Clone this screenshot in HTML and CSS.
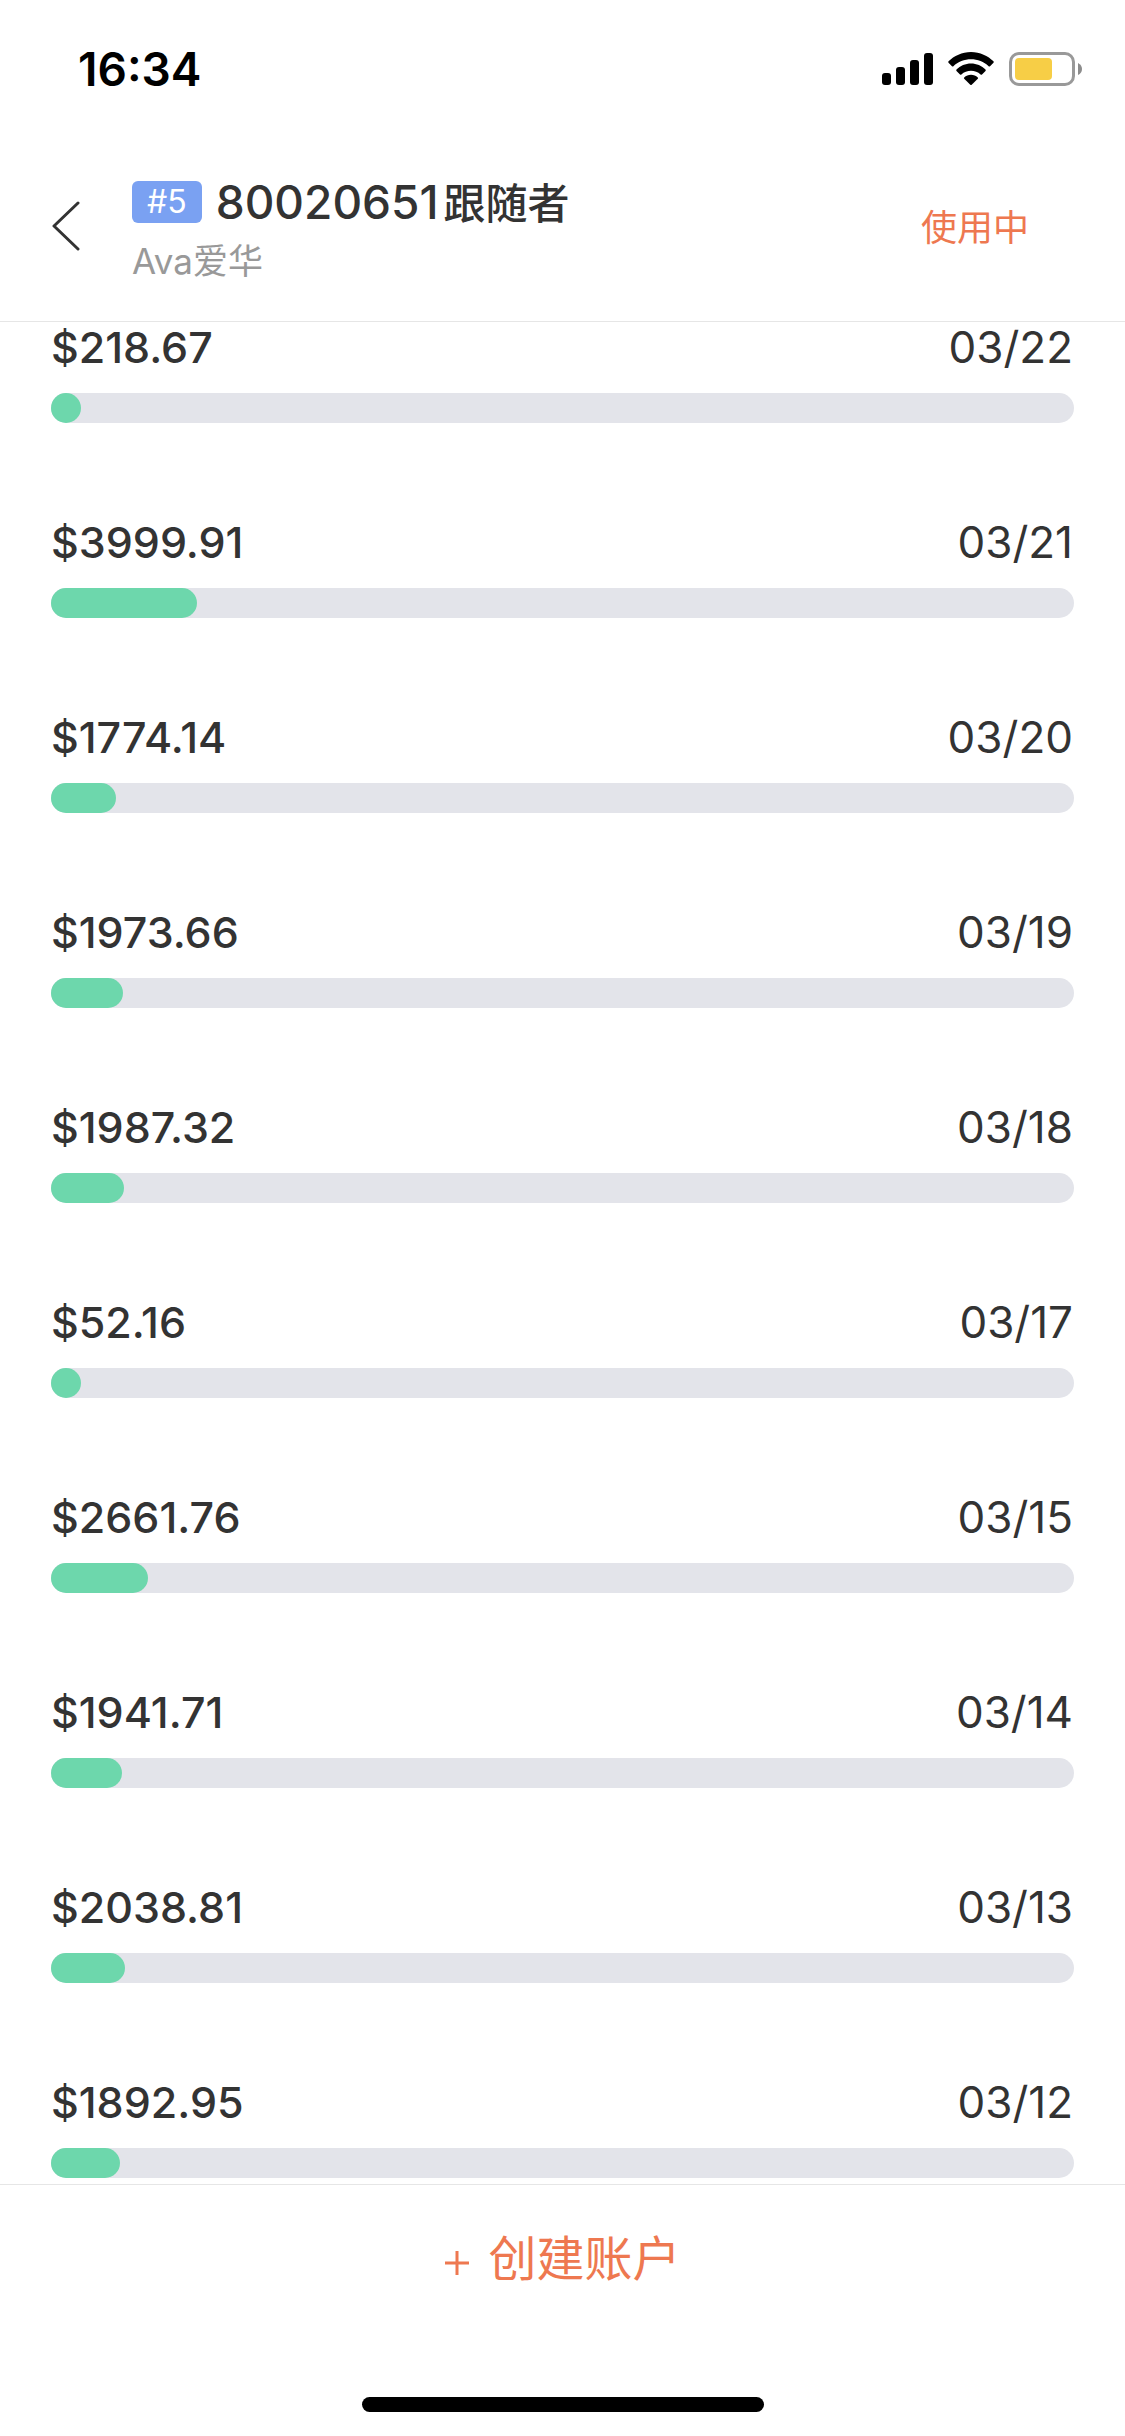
FILE: index.html
```html
<!DOCTYPE html>
<html lang="zh-CN">
<head>
<meta charset="utf-8">
<meta name="viewport" content="width=device-width, initial-scale=1">
<title>80020651跟随者</title>
<link rel="stylesheet" href="styles.css">
</head>
<body>
<div class="screen">
  <div class="status">
    <time class="clock">16:34</time>
    <div class="status-icons">
      <svg width="51" height="34" viewBox="0 0 51 34" aria-hidden="true">
        <rect x="0" y="21" width="9" height="12" rx="3"/>
        <rect x="14" y="15" width="9" height="18" rx="3"/>
        <rect x="28" y="8" width="9" height="25" rx="3"/>
        <rect x="42" y="1" width="9" height="32" rx="3"/>
      </svg>
      <svg width="46" height="34" viewBox="0 0 46 34" aria-hidden="true">
        <path d="M23 0C32 0 40 4 45.500 9.300Q46 10 45.500 10.700L42 14.200Q41.300 14.800 40.600 14.200C36 9.700 29.500 7.300 23 7.300S10 9.700 5.400 14.200Q4.700 14.800 4 14.200L.5 10.700Q0 10 .5 9.300C6 4 14 0 23 0Z"/>
        <path d="M23 11.500C28.500 11.500 33.800 13.800 37.500 17.500Q38.100 18.200 37.500 18.900L34 22.400Q33.300 23 32.600 22.400C30 19.900 26.500 18.700 23 18.700S16 19.900 13.400 22.400Q12.700 23 12 22.400L8.500 18.900Q7.900 18.200 8.500 17.500C12.200 13.800 17.500 11.500 23 11.500Z"/>
        <path d="M23 22.800C25.600 22.800 28 23.800 29.800 25.400Q30.400 26.100 29.800 26.800L23.700 32.700Q23 33.300 22.300 32.700L16.200 26.800Q15.600 26.100 16.200 25.400C18 23.800 20.400 22.800 23 22.800Z"/>
      </svg>
      <svg width="74" height="34" viewBox="0 0 74 34" aria-hidden="true">
        <rect x="1.500" y="1.500" width="63" height="31" rx="8.500" fill="#fff" stroke="#999" stroke-width="3"/>
        <rect x="6" y="6" width="37" height="22" rx="4" fill="#f7ce46"/>
        <path d="M69 11Q73 13 73 17T69 23Z" fill="#8c8c8c"/>
      </svg>
    </div>
  </div>

  <header class="header">
    <button class="back" type="button" aria-label="返回">
      <svg width="28" height="50" viewBox="0 0 28 50" aria-hidden="true">
        <path d="M26 2L2 25L26 48" fill="none" stroke="#333" stroke-width="3" stroke-linecap="round" stroke-linejoin="round"/>
      </svg>
    </button>
    <div class="account">
      <h1 class="title"><span class="badge">#5</span><span class="number">80020651</span><span class="role">跟随者</span></h1>
      <p class="subtitle">Ava爱华</p>
    </div>
    <span class="state">使用中</span>
  </header>

  <main class="list">
    <section class="row">
      <div class="labels"><span class="amount">$218.67</span><time class="date">03/22</time></div>
      <div class="track"><div class="fill" style="width:0.78%"></div></div>
    </section>
    <section class="row">
      <div class="labels"><span class="amount">$3999.91</span><time class="date">03/21</time></div>
      <div class="track"><div class="fill" style="width:14.29%"></div></div>
    </section>
    <section class="row">
      <div class="labels"><span class="amount">$1774.14</span><time class="date">03/20</time></div>
      <div class="track"><div class="fill" style="width:6.34%"></div></div>
    </section>
    <section class="row">
      <div class="labels"><span class="amount">$1973.66</span><time class="date">03/19</time></div>
      <div class="track"><div class="fill" style="width:7.05%"></div></div>
    </section>
    <section class="row">
      <div class="labels"><span class="amount">$1987.32</span><time class="date">03/18</time></div>
      <div class="track"><div class="fill" style="width:7.10%"></div></div>
    </section>
    <section class="row">
      <div class="labels"><span class="amount">$52.16</span><time class="date">03/17</time></div>
      <div class="track"><div class="fill" style="width:0.19%"></div></div>
    </section>
    <section class="row">
      <div class="labels"><span class="amount">$2661.76</span><time class="date">03/15</time></div>
      <div class="track"><div class="fill" style="width:9.51%"></div></div>
    </section>
    <section class="row">
      <div class="labels"><span class="amount">$1941.71</span><time class="date">03/14</time></div>
      <div class="track"><div class="fill" style="width:6.93%"></div></div>
    </section>
    <section class="row">
      <div class="labels"><span class="amount">$2038.81</span><time class="date">03/13</time></div>
      <div class="track"><div class="fill" style="width:7.28%"></div></div>
    </section>
    <section class="row">
      <div class="labels"><span class="amount">$1892.95</span><time class="date">03/12</time></div>
      <div class="track"><div class="fill" style="width:6.76%"></div></div>
    </section>
  </main>

  <footer class="footer">
    <button class="create" type="button"><svg class="plus" width="26" height="34" viewBox="0 0 26 34" aria-hidden="true"><path d="M13 9V33M1 21H25" stroke="currentColor" stroke-width="3"/></svg>创建账户</button>
    <div class="home-indicator"></div>
  </footer>
</div>
</body>
</html>
```
FILE: styles.css
```css
* {
  box-sizing: border-box;
}

body {
  margin: 0;
  background: #fff;
  color: #333;
  font-family: Inter, "Noto Sans CJK SC", sans-serif;
}

button {
  padding: 0;
  border: 0;
  background: none;
  font-family: inherit;
  cursor: pointer;
}

.screen {
  display: flex;
  flex-direction: column;
  min-height: 100vh;
}

.status {
  display: flex;
  align-items: center;
  justify-content: space-between;
  padding: 42px 42px 0 78px;
}

.clock {
  color: #000;
  font-size: 46px;
  font-weight: 600;
  line-height: 54px;
}

.status-icons {
  display: flex;
  gap: 15px;
}

.header {
  display: flex;
  align-items: center;
  padding: 68px 96px 33px 52px;
  border-bottom: 1px solid #e6e6e6;
}

.back {
  display: flex;
  width: 80px;
}

.account {
  flex: 1;
  padding-top: 6px;
}

.title {
  display: flex;
  align-items: center;
  margin: 0;
  font-size: 46px;
  font-weight: 500;
  line-height: 64px;
}

.badge {
  margin-right: 14px;
  padding: 0 15px;
  border-radius: 6px;
  background: #7aa1f2;
  color: #fff;
  font-size: 32px;
  font-weight: 400;
  line-height: 42px;
}

.role {
  margin-left: 5px;
  padding-top: 4px;
  font-size: 42px;
  line-height: 60px;
}

.subtitle {
  margin: 0;
  color: #999;
  font-size: 35px;
  line-height: 54px;
}

.state {
  color: #ee7850;
  font-size: 36px;
  line-height: 58px;
  padding-top: 4px;
}

.list {
  flex: 1;
  display: flex;
  flex-direction: column;
  gap: 94px;
  padding: 0 51px 6px;
}

.labels {
  display: flex;
  justify-content: space-between;
  margin-bottom: 21px;
  font-size: 44px;
  line-height: 50px;
}

.amount {
  font-size: 43px;
  font-weight: 500;
}

.date {
  padding-right: 1px;
}

.track {
  height: 30px;
  border-radius: 15px;
  background: #e3e4ea;
}

.fill {
  min-width: 30px;
  height: 100%;
  border-radius: 15px;
  background: #6dd7ac;
}

.footer {
  display: flex;
  flex-direction: column;
  align-items: center;
  gap: 102px;
  padding: 38px 0 24px;
  border-top: 1px solid #e6e6e6;
}

.create {
  display: flex;
  align-items: center;
  gap: 18px;
  color: #ee7850;
  font-size: 48px;
  line-height: 72px;
}

.home-indicator {
  width: 402px;
  max-width: 60%;
  height: 15px;
  border-radius: 8px;
  background: #000;
}
```
